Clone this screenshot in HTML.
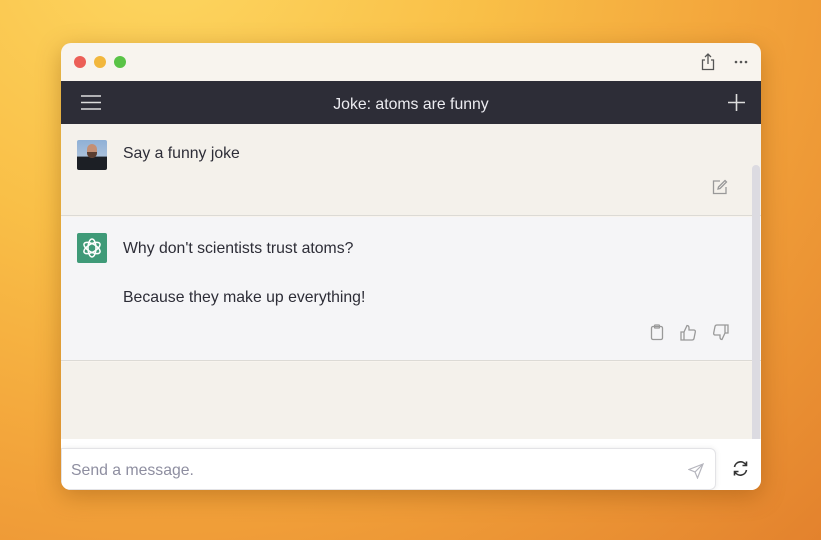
<!DOCTYPE html>
<html><head><style>
*{margin:0;padding:0;box-sizing:border-box}
body{width:821px;height:540px;overflow:hidden;font-family:"Liberation Sans",sans-serif;
background:radial-gradient(ellipse at 20% -10%,#fdd761 0%,#f9bf47 35%,#f2a23a 65%,#e3822d 100%);position:relative}
.win{position:absolute;left:61px;top:43px;width:700px;height:447px;border-radius:10px;overflow:hidden;background:#f8f4ee;box-shadow:0 6px 24px rgba(120,60,0,.35)}
.dot{position:absolute;top:13px;width:12px;height:12px;border-radius:50%}
.hdr{position:absolute;top:38px;left:0;width:700px;height:43px;background:#2d2d37;color:#ececf1;font-size:15.8px;text-align:center;line-height:47px}
.m1{position:absolute;top:81px;left:0;width:700px;height:92px;background:#f4f1eb;border-bottom:1px solid #dcdad5}
.m2{position:absolute;top:174px;left:0;width:700px;height:144px;background:#f5f5f7;border-bottom:1px solid #dcdad5}
.m3{position:absolute;top:319px;left:0;width:700px;height:77px;background:#f4f1eb}
.bot{position:absolute;top:396px;left:0;width:700px;height:51px;background:#fff}
.txt{position:absolute;left:62px;font-size:15.8px;color:#2d2d37}
.sb{position:absolute;left:691px;top:122px;width:8px;height:274px;background:#dcdbe1;border-radius:4px 4px 0 0}
.inp{position:absolute;left:0;top:405px;width:655px;height:42px;background:#fff;border:1px solid #e3e3e6;border-radius:0 6px 6px 6px;box-shadow:0 0 6px rgba(0,0,0,.08);font-size:15.8px;color:#8e8ea0;line-height:44px;padding-left:9px}
</style></head><body>
<div class="win">
<div class="dot" style="left:13px;background:#ec5f57"></div>
<div class="dot" style="left:33px;background:#f2b73d"></div>
<div class="dot" style="left:53px;background:#5ac346"></div>
<svg style="position:absolute;left:640px;top:10px" width="14" height="18" viewBox="0 0 14 18" fill="none" stroke="#555" stroke-width="1.3"><path d="M7 1v10M4 4l3-3 3 3M4 7H1.5v9.5h11V7H10"/></svg>
<svg style="position:absolute;left:673px;top:17px" width="14" height="4"><circle cx="2" cy="2" r="1.3" fill="#555"/><circle cx="7" cy="2" r="1.3" fill="#555"/><circle cx="12" cy="2" r="1.3" fill="#555"/></svg>
<div class="hdr">Joke: atoms are funny
<svg style="position:absolute;left:20px;top:14px" width="20" height="15" stroke="#ddd" stroke-width="1.6"><path d="M0 1h20M0 7.5h20M0 14h20"/></svg>
<svg style="position:absolute;left:667px;top:13px" width="17" height="17" stroke="#ddd" stroke-width="1.6"><path d="M8.5 0v17M0 8.5h17"/></svg>
</div>
<div class="m1">
<div style="position:absolute;left:16px;top:16px;width:30px;height:30px;border-radius:2px;background:linear-gradient(#8fb0d6 0%,#a9c0da 55%,#1c1f25 56%);overflow:hidden"><div style="position:absolute;left:10px;top:4px;width:10px;height:14px;border-radius:5px;background:#c48f74"></div><div style="position:absolute;left:10px;top:12px;width:10px;height:6px;border-radius:0 0 5px 5px;background:#5a3d30"></div></div>
<div class="txt" style="top:21px">Say a funny joke</div>
<svg style="position:absolute;left:651px;top:55px" width="16" height="16" fill="none" stroke="#999" stroke-width="1.3"><path d="M8 2H1.5v12.5H14V8"/><path d="M13 1.5l1.5 1.5L8 9.5 6 10l.5-2z"/></svg>
</div>
<div class="m2">
<div style="position:absolute;left:16px;top:16px;width:30px;height:30px;border-radius:2px;background:#3f9a78">
<svg width="30" height="30" viewBox="0 0 30 30" fill="none" stroke="#fff" stroke-width="1.5"><g transform="translate(15 15)"><ellipse rx="4" ry="9" transform="rotate(0)"/><ellipse rx="4" ry="9" transform="rotate(60)"/><ellipse rx="4" ry="9" transform="rotate(120)"/></g></svg></div>
<div class="txt" style="top:23px">Why don't scientists trust atoms?</div>
<div class="txt" style="top:72px">Because they make up everything!</div>
<svg style="position:absolute;left:589px;top:107px" width="14" height="17" fill="none" stroke="#999" stroke-width="1.3"><rect x="1.5" y="2.5" width="11" height="13" rx="1.5"/><rect x="4.5" y="1" width="5" height="3" rx=".8"/></svg>
<svg style="position:absolute;left:619px;top:107px" width="17" height="17" fill="none" stroke="#999" stroke-width="1.3"><path d="M1 8h3v8H1zM4 8l3-6.5c1.5 0 2 1 2 2.5V6h5c1 0 1.5 1 1.3 2l-1.3 6.5c-.2 1-1 1.5-2 1.5H4"/></svg>
<svg style="position:absolute;left:651px;top:107px" width="17" height="17" fill="none" stroke="#999" stroke-width="1.3"><path d="M16 9h-3V1h3zM13 9l-3 6.5c-1.5 0-2-1-2-2.5V11H3c-1 0-1.5-1-1.3-2L3 2.5C3.2 1.5 4 1 5 1h8"/></svg>
</div>
<div class="m3"></div>
<div class="sb"></div>
<div class="bot"></div>
<div class="inp">Send a message.
<svg style="position:absolute;left:626px;top:14px" width="16" height="16" fill="none" stroke="#b5b5bd" stroke-width="1.2"><path d="M15 1L1 6.5l6 2.5 2.5 6zM15 1L7 9"/></svg></div>
<svg style="position:absolute;left:671px;top:417px" width="17" height="17" fill="none" stroke="#333" stroke-width="1.6"><path d="M2.5 7a6.2 6.2 0 0 1 11.5-2M14.5 1.5V5.5h-4M14.5 10a6.2 6.2 0 0 1-11.5 2M2.5 15.5v-4h4"/></svg>
</div>
</body></html>
